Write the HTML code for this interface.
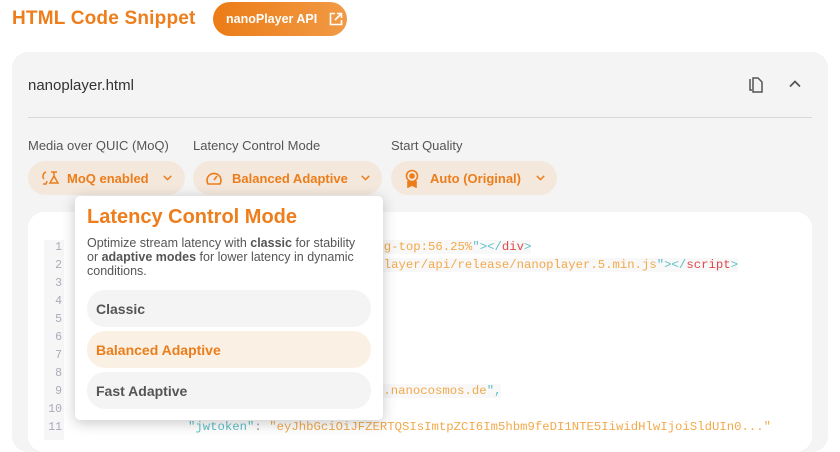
<!DOCTYPE html>
<html><head><meta charset="utf-8"><style>
*{box-sizing:border-box;margin:0;padding:0}
body{width:840px;height:435px;overflow:hidden;background:#fff;font-family:"Liberation Sans",sans-serif;position:relative}
.abs{position:absolute}
.title{left:12px;top:8px;font-size:19px;font-weight:bold;color:#ee7d1b;letter-spacing:0.2px}
.api{left:213px;top:2px;width:134px;height:34px;border-radius:17px;background:linear-gradient(90deg,#ec7c16,#f19a45);color:#fff;font-size:12.5px;font-weight:bold;display:flex;align-items:center;padding-left:13px}
.card{left:12px;top:52px;width:816px;height:400px;background:#f4f4f4;border-radius:16px}
.fname{left:28px;top:77px;font-size:15px;color:#333}
.hr{left:28px;top:117px;width:784px;height:1px;background:#d8d8d8}
.lbl{top:138px;font-size:13px;color:#555}
.chip{top:161px;height:34px;border-radius:17px;background:#f4e8dc;color:#ec7d1b;font-size:13px;font-weight:bold;display:flex;align-items:center}
.code{left:28px;top:212px;width:784px;height:240px;background:#fff;border-radius:16px}
.ln{left:44px;width:18px;text-align:right;font-family:"Liberation Mono",monospace;font-size:11.5px;color:#aab}
.cl{font-family:"Liberation Mono",monospace;font-size:12.3px;color:#f2a94a;white-space:pre}
.pop{left:75px;top:196px;width:308px;height:224px;background:#fff;border-radius:5px;box-shadow:0 3px 14px rgba(0,0,0,.22)}
.pt{left:87px;top:206px;font-size:20px;font-weight:bold;color:#ee7d1b}
.pd{left:87px;top:236px;width:282px;font-size:12.5px;line-height:14px;color:#555}
.opt{left:87px;width:284px;height:37px;border-radius:18px;background:#f4f4f4;font-size:14px;font-weight:bold;color:#555;padding-left:9px;display:flex;align-items:center}
</style></head><body>
<div class="abs title">HTML Code Snippet</div>
<div class="abs api">nanoPlayer API
<svg style="margin-left:12px" width="14" height="14" viewBox="0 0 14 14" fill="none" stroke="#fff" stroke-width="1.6"><path d="M6 1.5H1.5v11h11V8M8 1.5h4.5V6M12.5 1.5L6 8"/></svg></div>
<div class="abs card"></div>
<div class="abs fname">nanoplayer.html</div>
<svg class="abs" style="left:748px;top:76px" width="16" height="18" viewBox="0 0 16 18" fill="none" stroke="#555" stroke-width="1.5"><path d="M2 3v11h2M5 2h5l4 4v10H5z"/></svg>
<svg class="abs" style="left:789px;top:80px" width="12" height="8" viewBox="0 0 12 8" fill="none" stroke="#555" stroke-width="1.7"><path d="M1 6.5l5-5 5 5"/></svg>
<div class="abs hr"></div>
<div class="abs lbl" style="left:28px">Media over QUIC (MoQ)</div>
<div class="abs lbl" style="left:193px">Latency Control Mode</div>
<div class="abs lbl" style="left:391px">Start Quality</div>
<div class="abs chip" style="left:28px;width:157px;padding-left:13px">
<svg width="18" height="16" viewBox="0 0 18 16" fill="none" stroke="#ec7d1b" stroke-width="1.5"><path d="M5 2C2 3 1 7 3 9M2 14h3l1-3M10 2h6M13 2v4l-4 7h8l-4-7"/></svg>
<span style="margin-left:8px">MoQ enabled</span><svg style="margin-left:14px" width="9" height="6" viewBox="0 0 11 7" fill="none" stroke="#ec7d1b" stroke-width="1.8"><path d="M1 1l4.5 4.5L10 1"/></svg></div>
<div class="abs chip" style="left:193px;width:189px;padding-left:12px">
<svg width="18" height="16" viewBox="0 0 18 16" fill="none" stroke="#ec7d1b" stroke-width="1.6"><path d="M3 14A7 7 0 1 1 15 14zM9 10l3-4"/></svg>
<span style="margin-left:9px">Balanced Adaptive</span><svg style="margin-left:13px" width="9" height="6" viewBox="0 0 11 7" fill="none" stroke="#ec7d1b" stroke-width="1.8"><path d="M1 1l4.5 4.5L10 1"/></svg></div>
<div class="abs chip" style="left:391px;width:166px;padding-left:14px">
<svg width="14" height="19" viewBox="0 0 14 19" fill="none" stroke="#ec7d1b" stroke-width="1.6"><circle cx="7" cy="7" r="5.5"/><path d="M3 12v6l4-2 4 2v-6" fill="#ec7d1b"/><circle cx="7" cy="7" r="2" fill="#ec7d1b"/></svg>
<span style="margin-left:11px">Auto (Original)</span><svg style="margin-left:15px" width="9" height="6" viewBox="0 0 11 7" fill="none" stroke="#ec7d1b" stroke-width="1.8"><path d="M1 1l4.5 4.5L10 1"/></svg></div>
<div class="abs code"></div>
<div class="abs" style="left:44px;top:240px;width:20px;height:200px;background:#f6f6f6"></div>
<div class="abs ln" style="top:241px">1</div><div class="abs ln" style="top:259px">2</div><div class="abs ln" style="top:277px">3</div><div class="abs ln" style="top:295px">4</div><div class="abs ln" style="top:313px">5</div><div class="abs ln" style="top:331px">6</div><div class="abs ln" style="top:349px">7</div><div class="abs ln" style="top:367px">8</div><div class="abs ln" style="top:385px">9</div><div class="abs ln" style="top:403px">10</div><div class="abs ln" style="top:421px">11</div>
<div class="abs cl" style="left:369px;top:240px;background:#f8f8f8">ing-top:56.25%<span style="color:#5bc0c8">"&gt;&lt;/</span><span style="color:#e0474c">div</span><span style="color:#5bc0c8">&gt;</span></div>
<div class="abs cl" style="left:369px;top:258px;background:#f8f8f8">oplayer/api/release/nanoplayer.5.min.js<span style="color:#5bc0c8">"&gt;&lt;/</span><span style="color:#e0474c">script</span><span style="color:#5bc0c8">&gt;</span></div>
<div class="abs cl" style="left:376px;top:384px;background:#f8f8f8">g.nanocosmos.de<span style="color:#5bc0c8">",</span></div>
<div class="abs cl" style="left:188px;top:420px"><span style="color:#5bc0c8">"jwtoken"</span><span style="color:#999">: </span>"eyJhbGciOiJFZERTQSIsImtpZCI6Im5hbm9feDI1NTE5IiwidHlwIjoiSldUIn0..."</div>
<div class="abs pop"></div>
<div class="abs pt">Latency Control Mode</div>
<div class="abs pd">Optimize stream latency with <b>classic</b> for stability or <b>adaptive modes</b> for lower latency in dynamic conditions.</div>
<div class="abs opt" style="top:290px">Classic</div>
<div class="abs opt" style="top:331px;background:#fbf0e4;color:#ec7d1b">Balanced Adaptive</div>
<div class="abs opt" style="top:372px">Fast Adaptive</div>
</body></html>
